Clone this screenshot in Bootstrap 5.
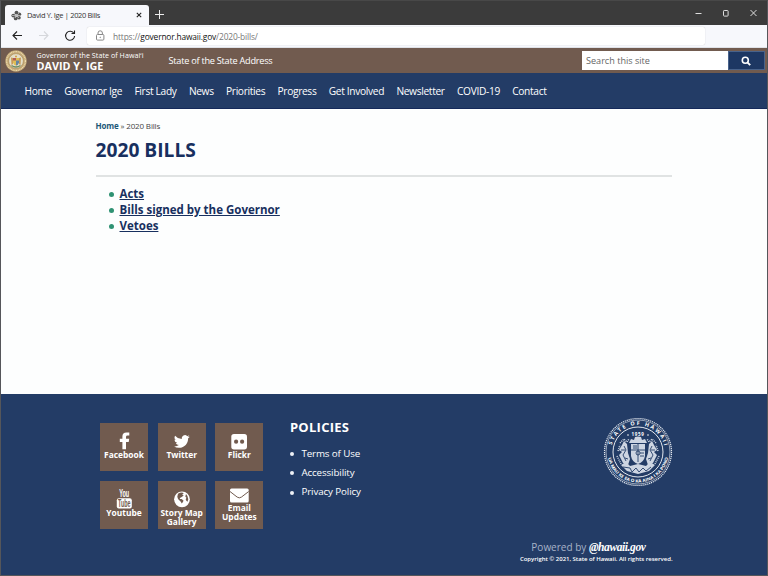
<!DOCTYPE html>
<html lang="en">
<head>
<meta charset="utf-8">
<title>David Y. Ige | 2020 Bills</title>
<link href="https://cdn.jsdelivr.net/npm/bootstrap@5.3.0/dist/css/bootstrap.min.css" rel="stylesheet">
<style>
:root{--navy:#233c66;--brown:#715b4f}
body{font-family:"Open Sans","Noto Sans",sans-serif;font-size:10px;line-height:1.4;width:768px;height:576px;overflow:hidden}
.win{height:576px;border:1px solid #55565a;border-top-color:#484848}
.win a{text-decoration:none;color:inherit;white-space:nowrap}
.win svg{display:block;flex:none}
.titlebar{height:24px;background:#3b3b3b;color:#eee}
.tab-active{width:144px;height:20px;margin:4px 0 0 4px;background:#f7f8fc;border-radius:3px 3px 0 0;color:#333;padding:0 7px 0 6px}
.tab-label{font-size:7.5px;letter-spacing:-.34px;white-space:nowrap;margin-left:5px}
.new-tab{margin:9px 0 0 6px}
.tools{height:23px;background:#f7f8fc;border-bottom:1px solid #dfe2e8}
.address{width:618px;height:18px;background:#fff;border-radius:2px;margin-left:9px;box-shadow:0 0 1px #bbb;font-size:8.4px;letter-spacing:-.16px;color:#777}
.address span{padding-top:1px}
.address b{font-weight:400;color:#111}
.brandbar{height:25px;background:var(--brown);color:#fff}
.brand-text{margin-left:9.5px;width:132px;white-space:nowrap;padding-top:2px}
.brand-over{font-size:7.1px;line-height:9px;letter-spacing:.06px}
.brand-name{font-size:10.8px;line-height:12px;font-weight:700}
.addr-link{font-size:9.2px;letter-spacing:-.26px;padding-top:1px}
.searchbox{width:146px;height:19px;border:0;padding:1px 4px 0;font-size:9.1px;background:#fff;color:#666}
.searchbtn{width:37px;height:19px;background:#1d3763;border:1px solid #48628b;padding-right:2px!important}
.searchform{margin-right:2px}
.mainnav{height:36px;background:var(--navy);color:#fff;padding:2px 0 0 23.5px;gap:12.3px;border-bottom:1px solid #14295a;font-size:10.2px;letter-spacing:-.33px}
.content-area{height:285px;background:#fdfefe;padding:11px 95px 0 94.500px}
.crumbs{font-size:8px;line-height:11px;color:#444;letter-spacing:-.15px}
.crumbs a{font-weight:700;color:#1c5878}
.page-title{font-size:19.2px;line-height:26px;font-weight:700;color:#18305f;margin:6px 0 12px}
.rule{border-top:2px solid #e0e3e3}
.bills{list-style:none;margin:9px 0 0;padding:0 0 0 13px;font-size:11.5px;line-height:16px;font-weight:700;color:#18305f}
.bills li,.policies li{display:flex;align-items:center}
.bills li::before{content:"";width:5px;height:5px;border-radius:50%;background:#2f9273;margin:1px 6px 0 0}
.win .bills a{text-decoration:underline;text-underline-offset:1.2px;text-decoration-thickness:1px}
.foot{height:181px;background:var(--navy);color:#fff;padding:29px 94.5px 0 99px}
.tiles{display:grid;grid-template-columns:repeat(3,48px);grid-auto-rows:48px;gap:9.7px}
.tile{background:var(--brown);font-weight:700;font-size:8.4px;line-height:9.6px;text-align:center;white-space:nowrap}
.tile svg{margin-bottom:-1px}
.policies-col{margin:-4px 0 0 26.5px;width:150px}
.policies-col h2{font-size:13px;line-height:16px;font-weight:700;letter-spacing:.28px;margin:0 0 9px}
.policies{list-style:none;padding:0;margin:0;font-size:9.8px;letter-spacing:-.12px;line-height:19.2px}
.policies li::before{content:"";width:4px;height:4px;border-radius:50%;background:#eef1f6;margin:1px 7.5px 0 0}
.seal{margin:-6px 0 0 0}
.powered{font-size:10px;line-height:12px;color:#a7b3c8;padding-right:27px}
.powered em{font:italic 700 11.5px/12px "Liberation Serif",serif;letter-spacing:-.4px;color:#fff}
.copy{font-size:6px;line-height:10px;font-weight:600;letter-spacing:-.03px;white-space:nowrap;margin:1px 0 11px}
</style>
<script src="https://cdn.jsdelivr.net/npm/bootstrap@5.3.0/dist/js/bootstrap.bundle.min.js"></script>
</head>
<body>
<div class="win">
<div class="titlebar d-flex">
  <div class="tab-active d-flex align-items-center">
    <svg width="11" height="11" viewBox="0 0 11 11"><g fill="#555"><circle cx="5.5" cy="2.6" r="1.9"/><circle cx="8.4" cy="4.3" r="1.8"/><circle cx="8" cy="7.7" r="1.8"/><circle cx="4.7" cy="8.4" r="1.9"/><circle cx="2.3" cy="5.6" r="1.9"/></g><path d="M3 3l5 5M8 2.8L4 8M1 5.5h8" stroke="#bbb" stroke-width=".8"/></svg>
    <span class="tab-label">David Y. Ige | 2020 Bills</span>
    <svg class="ms-auto" width="6" height="6" viewBox="0 0 6 6"><path d="M.8.8l4.4 4.4M5.2.8L.8 5.2" stroke="#222" stroke-width="1.1"/></svg>
  </div>
  <svg class="new-tab" width="9" height="9" viewBox="0 0 9 9"><path d="M4.500 0v9M0 4.500h9" stroke="#eee"/></svg>
  <svg class="ms-auto" width="76" height="24" viewBox="0 0 76 24" fill="none" stroke="#ddd"><path d="M4.500 12.500h6"/><rect x="32.500" y="9.500" width="4.600" height="5.600" rx=".7"/><path d="M59.500 9l6 6M65.500 9l-6 6"/></svg>
</div>
<div class="tools d-flex align-items-center">
  <svg width="77" height="22" viewBox="0 0 77 22" fill="none" stroke="#222" stroke-width="1.1"><path d="M21 10.500h-9M16 6.500l-4 4 4 4"/><path d="M38 10.500h9M43 6.500l4 4-4 4" stroke="#d5d7db"/><path d="M73 8.500a4.500 4.500 0 1 0 .6 2.500M73.500 5.500v3h-3"/></svg>
  <div class="address d-flex align-items-center">
    <svg width="26" height="18" viewBox="0 0 26 18" fill="none" stroke="#888"><rect x="9.500" y="7.500" width="7.400" height="5.600" rx="1"/><path d="M11 7V6a2.200 2.200 0 0 1 4.400 0v1"/><circle cx="13.200" cy="10.300" r=".3"/></svg>
    <span>https://<b>governor.hawaii.gov</b>/2020-bills/</span>
  </div>
</div>
<header class="brandbar d-flex align-items-center">
  <svg width="26" height="25" viewBox="0 0 26 25"><circle cx="15" cy="13" r="10.700" fill="#c3a878"/><circle cx="15" cy="13" r="9.400" fill="none" stroke="#f0dfae" stroke-width="1.200" stroke-dasharray="1 .7"/><circle cx="15" cy="13" r="7.400" fill="#e4dfc9" stroke="#a48346" stroke-width=".6"/><path d="M10 9.500l2 .5v6l-1.500 1zM20 9.500L18 10v6l1.500 1z" fill="#c79a58"/><path d="M12 10h6v4.500q-1 3-3 3t-3-3z" fill="#dfbd55"/><path d="M12 10h3v2.500h-3z" fill="#b35d55"/><path d="M15 12.500h3v2q-1 3-3 3z" fill="#6486a4"/><path d="M10.500 17.500q4.500 3 9 0" stroke="#6d8c64" stroke-width="1.300" fill="none"/><circle cx="15" cy="8.500" r="1" fill="#d29a45"/></svg>
  <div class="brand-text"><div class="brand-over">Governor of the State of Hawai&#699;i</div><div class="brand-name">DAVID Y. IGE</div></div>
  <a class="addr-link" href="#">State of the State Address</a>
  <form class="searchform d-flex ms-auto">
    <div class="searchbox d-flex align-items-center">Search this site</div>
    <button type="button" class="searchbtn p-0 d-flex align-items-center justify-content-center" aria-label="Search"><svg width="10" height="10" viewBox="0 0 10 10" fill="none" stroke="#fff"><circle cx="4.300" cy="4.300" r="3" stroke-width="1.600"/><path d="M6.600 6.600l2.600 2.600" stroke-width="1.900"/></svg></button>
  </form>
</header>
<nav class="mainnav d-flex align-items-center">
  <a href="#">Home</a><a href="#">Governor Ige</a><a href="#">First Lady</a><a href="#">News</a><a href="#">Priorities</a><a href="#">Progress</a><a href="#">Get Involved</a><a href="#">Newsletter</a><a href="#">COVID-19</a><a href="#">Contact</a>
</nav>
<main class="content-area">
  <div class="crumbs"><a href="#">Home</a> » 2020 Bills</div>
  <h1 class="page-title">2020 BILLS</h1>
  <div class="rule"></div>
  <ul class="bills"><li><a href="#">Acts</a></li><li><a href="#">Bills signed by the Governor</a></li><li><a href="#">Vetoes</a></li></ul>
</main>
<footer class="foot d-flex">
  <div class="tiles">
    <a href="#" class="tile d-flex flex-column align-items-center"><svg width="48" height="28" viewBox="0 0 48 28"><path d="M29.300 9.600v3h-1.700q-1.600 0-1.600 1.400v1.800h3.200l-.5 3.200H26v7.200h-3.600V19h-2.600v-3.200h2.600v-2.300q0-4 4.100-4 1.600 0 2.800.1z" fill="#fff"/></svg>Facebook</a>
    <a href="#" class="tile d-flex flex-column align-items-center"><svg width="48" height="28" viewBox="0 0 48 28"><path transform="translate(16 11.100) scale(.98)" d="M5.100 14c6 0 9.300-5 9.300-9.300v-.4A6.600 6.600 0 0 0 16 2.600a6.500 6.500 0 0 1-1.900.5A3.300 3.300 0 0 0 15.600 1.300a6.500 6.500 0 0 1-2.100.8A3.300 3.300 0 0 0 7.900 5 9.300 9.300 0 0 1 1.100 1.600a3.300 3.300 0 0 0 1 4.400A3.300 3.300 0 0 1 .6 5.600a3.300 3.300 0 0 0 2.700 3.300 3.300 3.300 0 0 1-1.500.1 3.300 3.300 0 0 0 3.100 2.200A6.600 6.600 0 0 1 0 12.600 9.300 9.300 0 0 0 5.100 14" fill="#fff"/></svg>Twitter</a>
    <a href="#" class="tile d-flex flex-column align-items-center"><svg width="48" height="28" viewBox="0 0 48 28"><rect x="16.300" y="11" width="15.700" height="15.500" rx="2.700" fill="#fff"/><circle cx="21.100" cy="18.700" r="2.100" fill="#715b4f"/><circle cx="27.100" cy="18.700" r="2.100" fill="#715b4f"/></svg>Flickr</a>
    <a href="#" class="tile d-flex flex-column align-items-center"><svg width="48" height="28" viewBox="0 0 48 28"><rect x="16.800" y="17.300" width="15" height="10.300" rx="2" fill="#fff"/><g font-family="Liberation Sans Narrow,Liberation Sans" font-weight="700" font-size="10" text-anchor="middle"><text x="24.200" y="16.400" textLength="10" lengthAdjust="spacingAndGlyphs" fill="#fff">You</text><text x="24.300" y="26" textLength="12.500" lengthAdjust="spacingAndGlyphs" fill="#715b4f">Tube</text></g></svg>Youtube</a>
    <a href="#" class="tile d-flex flex-column align-items-center"><svg width="48" height="28" viewBox="0 0 48 28"><circle cx="24" cy="18.300" r="7.900" fill="#fff"/><path d="M20 12.700q1.700-1.200 4-1.200l1.800.8-1.600 1.200 1.500.9-2 1.600-1.700.9-.2 1 1.800.2 1.900 1.500-.5 1.500-1.400 1.500q-.4-1.700-1.600-2.600-2.500-1.600-2.700-4.200zM28 13q2.200 2 2.300 5.300l-.8 2.500-1.200-1-.6-1.500.7-1.500-1.100-1.200z" fill="#715b4f"/></svg>Story Map<br>Gallery</a>
    <a href="#" class="tile d-flex flex-column align-items-center"><svg width="48" height="23" viewBox="0 0 48 23"><rect x="15" y="7.500" width="18.700" height="14" rx="1.500" fill="#fff"/><path d="M15 10.500l7.200 5.600q2.100 1.500 4.200 0l7.300-5.600" fill="none" stroke="#715b4f"/></svg>Email<br>Updates</a>
  </div>
  <div class="policies-col"><h2>POLICIES</h2><ul class="policies"><li><a href="#">Terms of Use</a></li><li><a href="#">Accessibility</a></li><li><a href="#">Privacy Policy</a></li></ul></div>
  <div class="ms-auto d-flex flex-column align-items-end">
    <svg class="seal" width="70" height="70" viewBox="0 0 70 70">
      <defs><path id="arcTop" d="M8 35a27 27 0 0 1 54 0"/><path id="arcLow" d="M4.500 35a30.500 30.500 0 0 0 61 0"/></defs>
      <g fill="none" stroke="#e3e8ef"><circle cx="35" cy="35" r="33.500" stroke-width="1.200" stroke-dasharray="1.200 .8"/><circle cx="35" cy="35" r="32" stroke-width=".6"/><circle cx="35" cy="35" r="25" stroke-width="1"/></g>
      <g fill="#fff" font-family="Open Sans" font-weight="700"><text font-size="5.400"><textPath href="#arcTop" startOffset="7" textLength="71">STATE OF HAWAII</textPath></text><text font-size="4.300"><textPath href="#arcLow" startOffset="6" textLength="84" lengthAdjust="spacingAndGlyphs">UA MAU KE EA O KA AINA I KA PONO</textPath></text><text x="35" y="18.500" font-size="4.500" letter-spacing=".7" text-anchor="middle">1959</text></g>
      <g fill="#fff"><circle cx="25" cy="18" r=".8"/><circle cx="45" cy="18" r=".8"/></g>
      <g fill="#cdd5e2"><path d="M26 26l2-4 3 1 1-3 3-.5 3 .5 1 3 3-1 2 4zM28 27h14v12q-1 6-7 8-6-2-7-8z"/><path d="M24 27l-3-3-2 4-3 5 3 2-3 3 4 8 5 2 2-6-2-6zM46 27l3-3 2 4 3 5-3 2 3 3-4 8-5 2-2-6 2-6z"/><path d="M18 48l5-3 4 4 8-2 8 2 4-4 5 3-6 6-11 3-11-3z"/></g>
      <g fill="none" stroke="#233c66" stroke-width=".9"><path d="M28 33h14M35 27v18M30 29h4M30 31h4M37 36h4M37 39h4M21 29l2 4-3 5 3 6M49 29l-2 4 3 5-3 6M20 50l7 1 2 4 4-4 3 4 4-4 3 3 5-4M18 33h4M48 33h4M22 41l3 1M45 42l3-1"/><circle cx="35" cy="36" r="2"/></g>
      <path d="M17 26l4-4 3 3 2-3M53 26l-4-4-3 3-2-3M14 39l4 8M56 39l-4 8M15 34l2-6M55 34l-2-6" stroke="#d5dce7" fill="none" stroke-width="1.500" stroke-dasharray="1 1"/>
    </svg>
    <div class="powered mt-auto">Powered by <em>@hawaii.gov</em></div>
    <div class="copy">Copyright © 2021, State of Hawaii. All rights reserved.</div>
  </div>
</footer>
</div>
</body>
</html>
